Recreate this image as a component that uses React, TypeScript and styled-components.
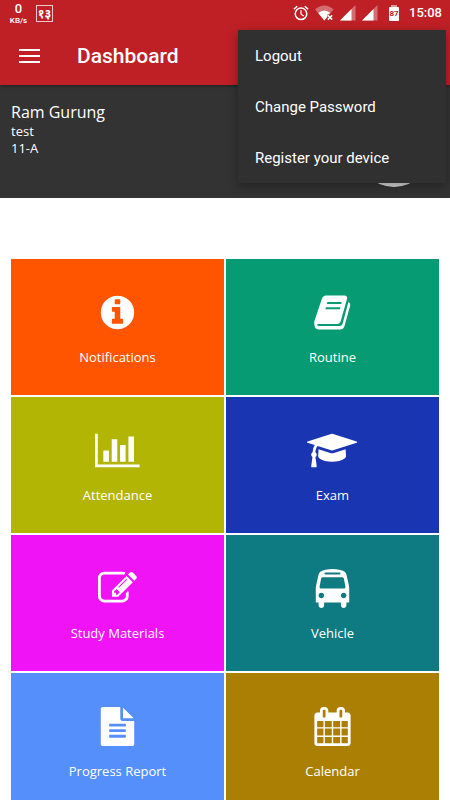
import React from "react";
import styled, { createGlobalStyle } from "styled-components";

const GlobalStyle = createGlobalStyle`
  *, *::before, *::after { box-sizing: border-box; }
  body { margin: 0; background: #fff; }
  button { border: 0; padding: 0; background: none; color: inherit; font: inherit; cursor: pointer; }
`;

const Screen = styled.div`
  position: relative;
  display: flex;
  flex-direction: column;
  height: 100vh;
  background: #fff;
  font-family: "Open Sans", "Noto Sans", sans-serif;
  color: #fff;
`;

const Header = styled.header`
  position: relative;
  flex: none;
  background: #be2026;
  font-family: Roboto, sans-serif;
  box-shadow: 0 1px 3px rgba(0, 0, 0, 0.4);
`;

const StatusBar = styled.div`
  display: flex;
  justify-content: space-between;
  align-items: center;
  height: 26px;
  padding: 0 8px 0 9px;
`;

const StatusGroup = styled.div<{ $gap: number }>`
  display: flex;
  align-items: center;
  gap: ${(p) => p.$gap}px;
`;

const NetSpeed = styled.div`
  display: flex;
  flex-direction: column;
  align-items: center;
  width: 19px;
  font-size: 8px;
  font-weight: 500;
  line-height: 9px;
`;

const NetValue = styled.span`
  font-size: 13px;
  font-weight: 500;
  line-height: 14px;
`;

const DateBadge = styled.span`
  display: flex;
  align-items: center;
  justify-content: center;
  width: 17px;
  height: 17px;
  border: 1px solid #f0c8c9;
  font: 700 12px/15px "Noto Sans", "Noto Sans Devanagari", sans-serif;
`;

const Clock = styled.time`
  margin-left: 4px;
  font-size: 13px;
  font-weight: 500;
  line-height: 16px;
`;

const Toolbar = styled.div`
  display: flex;
  align-items: center;
  gap: 37px;
  height: 59px;
  padding: 0 19px;
`;

const MenuButton = styled.button`
  display: flex;
  svg { display: block; }
`;

const Title = styled.h1`
  margin: 0;
  font-size: 21px;
  font-weight: 500;
  line-height: 26px;
`;

const OverflowMenu = styled.div`
  position: absolute;
  z-index: 2;
  top: 30px;
  right: 4px;
  display: flex;
  flex-direction: column;
  width: 208px;
  background: #303030;
  box-shadow: 0 3px 10px rgba(0, 0, 0, 0.35);
  font-family: Roboto, sans-serif;
`;

const MenuItem = styled.button`
  height: 51px;
  padding: 0 17px;
  text-align: left;
  font-size: 15px;
  line-height: 20px;
`;

const Content = styled.main`
  flex: 1;
  min-height: 0;
  overflow-y: auto;
  scrollbar-width: none;
`;

const Profile = styled.section`
  display: flex;
  justify-content: space-between;
  align-items: flex-start;
  height: 113px;
  padding: 16px 18px 0 11px;
  background: #333;
`;

const Name = styled.h2`
  margin: 0;
  font-size: 16px;
  font-weight: 400;
  line-height: 22px;
`;

const Detail = styled.p`
  margin: 0;
  font-size: 13px;
  line-height: 17px;
`;

const Avatar = styled.div`
  width: 76px;
  height: 76px;
  margin-top: 10px;
  border-radius: 50%;
  background: #dcdcdc;
`;

const Grid = styled.nav`
  display: grid;
  grid-template-columns: 1fr 1fr;
  gap: 2px;
  padding: 61px 11px 11px;
`;

const Tile = styled.button<{ $color: string }>`
  display: flex;
  flex-direction: column;
  align-items: center;
  height: 136px;
  padding-top: 34px;
  background: ${(p) => p.$color};
`;

const TileIcon = styled.svg`
  display: block;
  height: 39px;
  fill: #fff;
  fill-rule: evenodd;
`;

const TileLabel = styled.span`
  margin-top: 16px;
  font-size: 13px;
  line-height: 18px;
`;

type TileData = { label: string; color: string; box: string; path: string };

const tiles: TileData[] = [
  {
    label: "Notifications",
    color: "#ff5500",
    box: "0 0 1792 1792",
    path: "M1152 1376v-160q0-14-9-23t-23-9h-96v-512q0-14-9-23t-23-9h-320q-14 0-23 9t-9 23v160q0 14 9 23t23 9h96v320h-96q-14 0-23 9t-9 23v160q0 14 9 23t23 9h448q14 0 23-9t9-23zm-128-896v-160q0-14-9-23t-23-9h-192q-14 0-23 9t-9 23v160q0 14 9 23t23 9h192q14 0 23-9t9-23zm640 416q0 209-103 385.5t-279.5 279.5-385.5 103-385.5-103-279.5-279.5-103-385.5 103-385.5 279.5-279.5 385.5-103 385.5 103 279.5 279.5 103 385.5z",
  },
  {
    label: "Routine",
    color: "#069b72",
    box: "0 0 39 39",
    path: "M13 2.5H31.5Q34.8 2.5 34 6L27.8 27.7Q27 30.9 24 30.9H6Q3.8 30.9 4 32Q4.4 33 6.5 33H26.5Q28.8 33 29.5 31L35.4 9Q37.8 10 37.2 12.5L31.5 33Q30.5 36.5 27 36.5H6.5Q1.3 36.5 1.3 31V28.5L8.8 6Q9.9 2.5 13 2.5zM14.4 9 13.8 11H28.2L28.8 9zM12.9 14.3 12.3 16.3H26.8L27.4 14.3z",
  },
  {
    label: "Attendance",
    color: "#b3b505",
    box: "0 0 2048 1792",
    path: "M640 896v512h-256v-512h256zm384-512v1024h-256v-1024h256zm1024 1152v128h-2048v-1536h128v1408h1920zm-640-896v768h-256v-768h256zm384-384v1152h-256v-1152h256z",
  },
  {
    label: "Exam",
    color: "#1a35b1",
    box: "0 0 2304 1792",
    path: "M1774 836l18 316q4 69-82 128t-235 93.5-323 34.5-323-34.5-235-93.5-82-128l18-316 574 181q22 7 48 7t48-7zm530-324q0 23-22 31l-1120 352q-4 1-10 1t-10-1l-652-206q-43 34-71 111.5t-34 178.5q63 36 63 109 0 69-58 107l58 433q2 14-8 25-9 11-24 11h-192q-15 0-24-11-10-11-8-25l58-433q-58-38-58-107 0-73 65-111 11-207 98-330l-333-104q-22-8-22-31t22-31l1120-352q4-1 10-1t10 1l1120 352q22 8 22 31z",
  },
  {
    label: "Study Materials",
    color: "#ef13f5",
    box: "0 0 1792 1792",
    path: "M888 1184l116-116-152-152-116 116v56h96v96h56zm440-720q-16-16-33 1l-350 350q-17 17-1 33t33-1l350-350q17-17 1-33zm80 594v190q0 119-84.5 203.5t-203.5 84.5h-832q-119 0-203.5-84.5t-84.5-203.5v-832q0-119 84.5-203.5t203.5-84.5h832q63 0 117 25 15 7 18 23 3 17-9 29l-49 49q-14 14-32 8-23-6-45-6h-832q-66 0-113 47t-47 113v832q0 66 47 113t113 47h832q66 0 113-47t47-113v-126q0-13 9-22l64-64q15-15 35-7t20 29zm-96-738l288 288-672 672h-288v-288zm444 132l-92 92-288-288 92-92q28-28 68-28t68 28l152 152q28 28 28 68t-28 68z",
  },
  {
    label: "Vehicle",
    color: "#0e7a82",
    box: "0 0 1792 1792",
    path: "M512 1216q0-53-37.5-90.5t-90.5-37.5-90.5 37.5-37.5 90.5 37.5 90.5 90.5 37.5 90.5-37.5 37.5-90.5zm1024 0q0-53-37.5-90.5t-90.5-37.5-90.5 37.5-37.5 90.5 37.5 90.5 90.5 37.5 90.5-37.5 37.5-90.5zm-46-396l-72-384q-5-23-22.5-37.5t-40.5-14.5h-918q-23 0-40.5 14.5t-22.5 37.5l-72 384q-5 30 14 53t49 23h1062q30 0 49-23t14-53zm-226-612q0-20-14-34t-34-14h-640q-20 0-34 14t-14 34 14 34 34 14h640q20 0 34-14t14-34zm400 725v603h-128v128q0 53-37.5 90.5t-90.5 37.5-90.5-37.5-37.5-90.5v-128h-768v128q0 53-37.5 90.5t-90.5 37.5-90.5-37.5-37.5-90.5v-128h-128v-603q0-112 25-223l103-454q9-78 97.5-137t230-89 312.5-30 312.5 30 230 89 97.5 137l105 454q23 102 23 223z",
  },
  {
    label: "Progress Report",
    color: "#558ffb",
    box: "0 0 1792 1792",
    path: "M1596 476q14 14 28 36h-472v-472q22 14 36 28zm-476 164h544v1056q0 40-28 68t-68 28h-1344q-40 0-68-28t-28-68v-1600q0-40 28-68t68-28h800v544q0 40 28 68t68 28zm160 736v-64q0-14-9-23t-23-9h-704q-14 0-23 9t-9 23v64q0 14 9 23t23 9h704q14 0 23-9t9-23zm0-256v-64q0-14-9-23t-23-9h-704q-14 0-23 9t-9 23v64q0 14 9 23t23 9h704q14 0 23-9t9-23zm0-256v-64q0-14-9-23t-23-9h-704q-14 0-23 9t-9 23v64q0 14 9 23t23 9h704q14 0 23-9t9-23z",
  },
  {
    label: "Calendar",
    color: "#aa7f03",
    box: "0 0 1792 1792",
    path: "M192 1664h288v-288h-288v288zm352 0h320v-288h-320v288zm-352-352h288v-320h-288v320zm352 0h320v-320h-320v320zm-352-384h288v-288h-288v288zm736 736h320v-288h-320v288zm-384-736h320v-288h-320v288zm768 736h288v-288h-288v288zm-384-352h320v-320h-320v320zm-352-864v-288q0-13-9.5-22.5t-22.5-9.5h-64q-13 0-22.5 9.5t-9.5 22.5v288q0 13 9.5 22.5t22.5 9.5h64q13 0 22.5-9.5t9.5-22.5zm736 864h288v-320h-288v320zm-384-384h320v-288h-320v288zm384 0h288v-288h-288v288zm32-480v-288q0-13-9.5-22.5t-22.5-9.5h-64q-13 0-22.5 9.5t-9.5 22.5v288q0 13 9.5 22.5t22.5 9.5h64q13 0 22.5-9.5t9.5-22.5zm384-64v1280q0 52-38 90t-90 38h-1408q-52 0-90-38t-38-90v-1280q0-52 38-90t90-38h128v-96q0-66 47-113t113-47h64q66 0 113 47t47 113v96h384v-96q0-66 47-113t113-47h64q66 0 113 47t47 113v96h128q52 0 90 38t38 90z",
  },
];

const AlarmIcon = () => (
  <svg width="16" height="16" viewBox="0 0 16 16" fill="none" stroke="#fff" strokeWidth="1.5" aria-hidden="true">
    <circle cx="8" cy="8.8" r="5.8" />
    <path d="M8 5.2v4l2.7 1.7" strokeWidth="1.2" />
    <path d="M.9 4.1 4.2 1.3M15.1 4.1l-3.3-2.8" />
  </svg>
);

const WifiIcon = () => (
  <svg width="19" height="16" viewBox="0 0 19 16" aria-hidden="true">
    <path d="M0 4.2Q9.3-3.4 18.6 4.2L9.3 15.6z" fill="#fff" opacity=".35" />
    <path d="M3.2 8q6-5 12.2 0l-3.2 1.4v2.7L9.3 15.6z" fill="#fff" />
    <path d="m12.8 10.2 4.4 4.4m0-4.4-4.4 4.4" stroke="#fff" strokeWidth="1.5" />
  </svg>
);

const SignalIcon = () => (
  <svg width="16" height="16" viewBox="0 0 16 16" fill="#fff" aria-hidden="true">
    <path d="M0 15.5 15.5 0v15.5z" opacity=".35" />
    <path d="M0 15.5 11.5 4v11.5z" />
  </svg>
);

const BatteryLevel = styled.span`
  display: flex;
  align-items: center;
  justify-content: center;
  width: 10px;
  height: 14px;
  margin-top: 2px;
  border-radius: 1px;
  background: #fff;
  color: #be2026;
  font-size: 8px;
  font-weight: 700;
  line-height: 8px;
`;

const Battery = styled.span`
  display: flex;
  flex-direction: column;
  align-items: center;
  margin-left: 5px;
  background: linear-gradient(#e2989b, #e2989b) top center / 6px 2px no-repeat;
`;

export default function App() {
  return (
    <Screen>
      <GlobalStyle />
      <Header>
        <StatusBar>
          <StatusGroup $gap={8}>
            <NetSpeed>
              <NetValue>0</NetValue>
              <span>KB/s</span>
            </NetSpeed>
            <DateBadge>१३</DateBadge>
          </StatusGroup>
          <StatusGroup $gap={6}>
            <AlarmIcon />
            <WifiIcon />
            <SignalIcon />
            <SignalIcon />
            <Battery>
              <BatteryLevel>87</BatteryLevel>
            </Battery>
            <Clock>15:08</Clock>
          </StatusGroup>
        </StatusBar>
        <Toolbar>
          <MenuButton aria-label="Open navigation">
            <svg width="21" height="14" viewBox="0 0 21 14" fill="#fff" aria-hidden="true">
              <path d="M0 0h21v2H0zM0 6h21v2H0zM0 12h21v2H0z" />
            </svg>
          </MenuButton>
          <Title>Dashboard</Title>
        </Toolbar>
      </Header>
      <OverflowMenu role="menu">
        <MenuItem role="menuitem">Logout</MenuItem>
        <MenuItem role="menuitem">Change Password</MenuItem>
        <MenuItem role="menuitem">Register your device</MenuItem>
      </OverflowMenu>
      <Content>
        <Profile>
          <div>
            <Name>Ram Gurung</Name>
            <Detail>test</Detail>
            <Detail>11-A</Detail>
          </div>
          <Avatar />
        </Profile>
        <Grid aria-label="Sections">
          {tiles.map((t) => (
            <Tile key={t.label} $color={t.color}>
              <TileIcon viewBox={t.box} aria-hidden="true">
                <path d={t.path} />
              </TileIcon>
              <TileLabel>{t.label}</TileLabel>
            </Tile>
          ))}
        </Grid>
      </Content>
    </Screen>
  );
}
